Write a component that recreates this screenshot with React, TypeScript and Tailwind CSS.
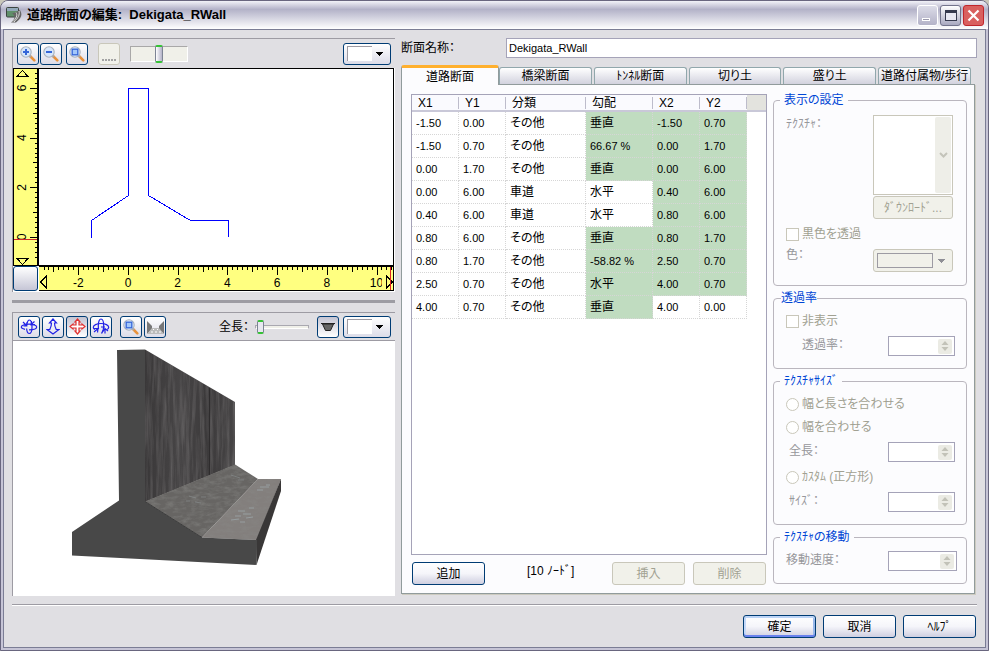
import React from 'react';
import { clsx } from 'clsx';

type RowData = { cells: string[]; green: boolean[] };

const rows: RowData[] = [
  { cells: ['-1.50', '0.00', 'その他', '垂直', '-1.50', '0.70'], green: [true, true, true] },
  { cells: ['-1.50', '0.70', 'その他', '66.67 %', '0.00', '1.70'], green: [true, true, true] },
  { cells: ['0.00', '1.70', 'その他', '垂直', '0.00', '6.00'], green: [true, true, true] },
  { cells: ['0.00', '6.00', '車道', '水平', '0.40', '6.00'], green: [false, true, true] },
  { cells: ['0.40', '6.00', '車道', '水平', '0.80', '6.00'], green: [false, true, true] },
  { cells: ['0.80', '6.00', 'その他', '垂直', '0.80', '1.70'], green: [true, true, true] },
  { cells: ['0.80', '1.70', 'その他', '-58.82 %', '2.50', '0.70'], green: [true, true, true] },
  { cells: ['2.50', '0.70', 'その他', '水平', '4.00', '0.70'], green: [true, true, true] },
  { cells: ['4.00', '0.70', 'その他', '垂直', '4.00', '0.00'], green: [true, false, false] },
];

const headers = ['X1', 'Y1', '分類', '勾配', 'X2', 'Y2'];
const tabs = ['橋梁断面', 'ﾄﾝﾈﾙ断面', '切り土', '盛り土', '道路付属物/歩行'];

const UNIT = 24.85;

/* ---------- icons ---------- */

function Magnifier({ kind }: { kind: 'plus' | 'minus' | 'box' }) {
  return (
    <svg width="16" height="16" viewBox="0 0 16 16" aria-hidden="true">
      <path d="M10.500 10.500l3.800 3.800" stroke="#e8923c" strokeWidth="2.600" strokeLinecap="round" />
      <path d="M9.500 9.500l1.500 1.500" stroke="#a8a4a8" strokeWidth="2" />
      <circle cx="6" cy="6" r="5.200" fill="#d6e6fb" stroke="#a9b2bd" strokeWidth="1.100" />
      {kind === 'plus' && <path d="M3 6h6M6 3v6" stroke="#3566d8" strokeWidth="2" />}
      {kind === 'minus' && <path d="M3 6h6" stroke="#3566d8" strokeWidth="2" />}
      {kind === 'box' && <rect x="3.200" y="3.200" width="5.600" height="5.600" fill="#a3c8fb" stroke="#3566d8" strokeWidth="1.300" />}
    </svg>
  );
}

function OrbitIcon() {
  return (
    <svg width="18" height="16" viewBox="0 0 18 16" fill="none" stroke="#2222e6" strokeWidth="1.200" aria-hidden="true">
      <path d="M7 4.500C7.500 2.500 8.300 1 9.300 1c1.500 0 2.700 3 2.700 7s-1.200 6.500-2.700 6.500S6.800 12 6.600 9.500" />
      <path d="M5 10.300C2.800 9.800 1.300 9 1.300 8c0-1.500 3.400-2.800 7.700-2.800S16.700 6.500 16.700 8 13.500 10.800 9 10.800" />
      <path d="M3 3l3.500 3.500M6.800 3.500v3.300H3.500" />
      <path d="M14.500 2.500L11 5.500M15 5.500l-4 .3.500-3.800" />
    </svg>
  );
}

function UpDownIcon() {
  return (
    <svg width="14" height="17" viewBox="0 0 14 17" fill="none" stroke="#2222e6" strokeWidth="1.200" aria-hidden="true">
      <path d="M7 1L3.500 5H5.500C5.500 8 4.500 10 3.800 11.500H1L7 16L13 11.500H10.200C9.500 10 8.500 8 8.500 5H10.500z" />
    </svg>
  );
}

function MoveIcon() {
  return (
    <svg width="17" height="17" viewBox="0 0 17 17" fill="none" stroke="#e03030" strokeWidth="1.200" aria-hidden="true">
      <path d="M8.500 1L11 4H10V7H13V6L16 8.500L13 11V10H10V13H11L8.500 16L6 13H7V10H4V11L1 8.500L4 6V7H7V4H6z" fill="#fff" />
    </svg>
  );
}

function RotateIcon() {
  return (
    <svg width="18" height="17" viewBox="0 0 18 17" fill="none" stroke="#2222e6" strokeWidth="1.200" aria-hidden="true">
      <path d="M6.600 11C6.300 10 6.300 9 6.300 7.500c0-3.800 1.200-6.500 2.700-6.500s2.700 3 2.700 7-.9 6-2.200 7.500" />
      <path d="M3 11.500C1.800 11 1.300 10 1.300 9.200c0-2 3.400-3.700 7.700-3.700s7.700 1.700 7.700 3.700c0 .8-.5 1.600-1.500 2.300" />
      <path d="M2 14l3.500-3M2 10.500l4 0-.5 4M13 15.500v-4M10.500 13.500l2.500-3 3 2.500M9 9h4" />
    </svg>
  );
}

function RoadViewIcon() {
  return (
    <svg width="17" height="14" viewBox="0 0 17 14" aria-hidden="true">
      <path d="M0 1l5 5v3l-5 5z" fill="#777" />
      <path d="M17 1l-5 5v3l5 5z" fill="#777" />
      <path d="M5 8h7l5 6H0z" fill="#bbb" />
      <path d="M4 12h2M8 12h2M12 12h2M6 9.500h1M10 9.500h1" stroke="#fff" />
    </svg>
  );
}

function AppIcon() {
  return (
    <svg width="16" height="16" viewBox="0 0 16 16" aria-hidden="true">
      <rect x="0.500" y="0.500" width="12" height="9.500" rx="1" fill="#5f8f6a" stroke="#3c4440" />
      <path d="M1 1h11v3H1z" fill="#93a9ba" />
      <path d="M6 6c4 0 5-2 8-3 2.500 4 2 8-4 12.500H5c4-3.500 5-6 1-9.500z" fill="#666" />
      <path d="M13 4c1 4-1 7-5 11M10 5.500c2 3 0 6-3 9" stroke="#ddd" fill="none" />
    </svg>
  );
}

function DownArrow({ muted = false }: { muted?: boolean }) {
  return (
    <svg width="7" height="4" viewBox="0 0 7 4" shapeRendering="crispEdges" aria-hidden="true">
      <path d="M0 0h7L3.500 4z" fill={muted ? '#8f8f95' : '#000'} />
    </svg>
  );
}

/* ---------- small controls ---------- */

function ToolButton({ label, pressed, children, className }: { label: string; pressed?: boolean; children?: React.ReactNode; className?: string }) {
  return (
    <button
      type="button"
      aria-label={label}
      className={clsx(
        'flex h-[22px] w-[22px] shrink-0 items-center justify-center rounded-[3px] border border-[#003c74]',
        pressed ? 'bg-linear-to-b from-[#c4c4d2] to-white' : 'bg-linear-to-b from-white to-[#dcdce8]',
        className,
      )}
    >
      {children}
    </button>
  );
}

function SwatchButton({ label }: { label: string }) {
  return (
    <button
      type="button"
      aria-label={label}
      className="flex h-[22px] w-12 shrink-0 items-center gap-1 rounded-[3px] border border-[#003c74] bg-linear-to-b from-white to-[#dcdce8] pl-[3px]"
    >
      <span className="h-[15px] w-[25px] border-t border-l border-[#9d9ba3] bg-white" />
      <DownArrow />
    </button>
  );
}

function PushButton({ children, disabled, primary }: { children: React.ReactNode; disabled?: boolean; primary?: boolean }) {
  return (
    <button
      type="button"
      disabled={disabled}
      className={clsx(
        'h-[23px] w-[73px] shrink-0 rounded-[3px] border text-center leading-5',
        disabled
          ? 'border-[#c9c7ba] bg-[#f1f1ea] text-[#a1a192]'
          : 'border-[#003c74] bg-linear-to-b from-white via-[#f5f5fa] to-[#cfcfe0] text-black',
        primary && 'shadow-[inset_0_2px_0_#bcd4f6,inset_0_-2px_0_#6982ee,inset_2px_0_0_#c4d8f8,inset_-2px_0_0_#98b8ea]',
      )}
    >
      {children}
    </button>
  );
}

function Spin({ id, wide }: { id: string; wide?: boolean }) {
  return (
    <span className={clsx('flex h-5 shrink-0 items-center border border-[#a5a3b8] bg-white pr-[2px]', wide ? 'w-[69px]' : 'w-[67px]')}>
      <input id={id} type="text" disabled className="h-full w-0 flex-1 bg-white px-1 outline-none" />
      <span className="flex h-[15px] w-[14px] flex-col items-center justify-center rounded-[2px] bg-[#ebebe4]">
        <svg width="8" height="12" viewBox="0 0 8 12" aria-hidden="true">
          <path d="M0.500 5L4 1L7.500 5zM0.500 7L4 11L7.500 7z" fill="#c2c2b8" />
        </svg>
      </span>
    </span>
  );
}

function Group({ title, children, className, tight }: { title: string; children: React.ReactNode; className?: string; tight?: boolean }) {
  return (
    <fieldset className={clsx('rounded-[4px] border border-[#bab6be] pl-3 text-[#97979b]', className)}>
      <legend className={clsx('h-3 leading-3 text-[#0046d5]', tight ? '-ml-[5px]' : '-ml-[6px] px-1')}>{title}</legend>
      {children}
    </fieldset>
  );
}

const tickBox = 'h-[13px] w-[13px] shrink-0 appearance-none border border-[#c9c7ba] bg-white';
const radioDot = 'h-[13px] w-[13px] shrink-0 appearance-none rounded-full border border-[#c9c7ba] bg-white';

/* ---------- 2D section ---------- */

function VerticalRuler() {
  const ticks = Array.from({ length: 38 }, (_, i) => i - 4);
  return (
    <svg width="26" height="198" viewBox="13 68 26 198" className="block" shapeRendering="crispEdges">
      <rect x="13" y="68" width="26" height="198" fill="#ffff80" />
      {ticks.map((t) => {
        const y = Math.round(237 - (t / 5) * UNIT);
        const len = t % 10 === 0 ? 7 : t % 5 === 0 ? 4 : 2;
        return <rect key={t} x={37 - len} y={y} width={len} height="1" fill="#000" />;
      })}
      <g fontSize="12" textAnchor="middle" fill="#000">
        {[0, 2, 4, 6].map((v) => (
          <text key={v} transform={`translate(26 ${237 - v * UNIT}) rotate(-90)`}>{v}</text>
        ))}
      </g>
      <path d="M17 76.500h11L22.500 70.500z M17 258.500h11L22.500 264.500z" fill="none" stroke="#000" />
      <rect x="13" y="239" width="24" height="1" fill="#d02828" />
      <path d="M13 68.500h26M13.500 68v198M13 265.500h26" stroke="#000" />
      <rect x="37" y="68" width="2" height="198" fill="#000" />
    </svg>
  );
}

function HorizontalRuler() {
  const ticks = Array.from({ length: 71 }, (_, i) => i - 17);
  return (
    <svg width="355" height="26" viewBox="39 266 355 26" className="block" shapeRendering="crispEdges">
      <rect x="39" y="266" width="355" height="25" fill="#ffff80" />
      {ticks.map((t) => {
        const x = Math.round(128 + (t / 5) * UNIT);
        const len = t % 10 === 0 ? 8 : t % 5 === 0 ? 5 : 3;
        return <rect key={t} x={x} y="267" width="1" height={len} fill="#000" />;
      })}
      <g fontSize="12" textAnchor="middle" fill="#000">
        {[-2, 0, 2, 4, 6, 8, 10].map((v) => (
          <text key={v} x={128 + v * UNIT} y="287">{v}</text>
        ))}
      </g>
      <rect x="382" y="276" width="12" height="14" fill="#ffff80" />
      <path d="M46.500 276v12L40.500 282z M386.500 276v12L392.500 282z" fill="none" stroke="#000" />
      <rect x="390" y="267" width="1" height="23" fill="#e02020" />
      <path d="M39 266.500h355M39 290.500h355M393.500 266v25" stroke="#000" />
      <rect x="39" y="291" width="355" height="1" fill="#fff" />
    </svg>
  );
}

function SectionCanvas() {
  return (
    <svg width="355" height="198" viewBox="39 68 355 198" className="block" shapeRendering="crispEdges">
      <rect x="39" y="68" width="355" height="198" fill="#fff" />
      <path
        d="M91.500 238V220.500L128.500 195.500V88.500H148.500V195.500L190.500 220.500H228.500V237"
        fill="none"
        stroke="#0000ff"
      />
      <path d="M39 68.500h355M39 265.500h355M393.500 68v198" stroke="#000" />
    </svg>
  );
}

/* ---------- 3D preview ---------- */

function WallPreview() {
  return (
    <svg width="382" height="254" viewBox="13 341 382 254" className="block">
      <defs>
        <filter id="streaks" x="0" y="0" width="1" height="1">
          <feTurbulence type="fractalNoise" baseFrequency="0.3 0.02" numOctaves="4" seed="4" />
          <feColorMatrix values="0 0 0 0 0.55  0 0 0 0 0.53  0 0 0 0 0.53  1.6 0 0 0 -0.6" />
          <feComposite in2="SourceGraphic" operator="in" />
        </filter>
        <filter id="grain" x="0" y="0" width="1" height="1">
          <feTurbulence type="fractalNoise" baseFrequency="0.12 0.3" numOctaves="4" seed="9" />
          <feColorMatrix values="0 0 0 0 0.25  0 0 0 0 0.25  0 0 0 0 0.24  1.8 0 0 0 -0.7" />
          <feComposite in2="SourceGraphic" operator="in" />
        </filter>
        <linearGradient id="wallShade" x1="0" x2="1">
          <stop offset="0" stopColor="#3a3839" />
          <stop offset="0.4" stopColor="#474546" />
          <stop offset="0.68" stopColor="#3c3a3b" />
          <stop offset="1" stopColor="#464445" />
        </linearGradient>
      </defs>
      <path d="M145 349.500L235 402V465L145 502z" fill="url(#wallShade)" />
      <path d="M145 349.500L235 402V465L145 502z" fill="#fff" filter="url(#streaks)" opacity="0.28" />
      <path d="M209.500 388V475" stroke="#2e2c2d" />
      <path d="M145 501.500L235 464.500L258 479L202 537.500z" fill="#676563" />
      <path d="M258 479H281L257 540L202 537.500z" fill="#837f7d" />
      <path d="M145 501.500L235 464.500L258 479H281L257 540L202 537.500z" fill="#fff" filter="url(#grain)" opacity="0.6" />
      <path d="M281 479V491L256.500 565L256 540z" fill="#393737" />
      <path d="M117 350L145 349.500V501.500L202 537.500L257 540L256.500 565L72 555.500V532L119 500.500z" fill="#484848" />
      <g stroke="#9ca5a8" strokeWidth="1" opacity="0.8">
        <path d="M238 511h7M231 520l8-1M235 516h6M243 514h8M246 518l7-1M240 522h5M249 508h5M260 487h9M257 490h6M266 485h4" />
        <path d="M189 496l7 2M195 502l6 1M186 501h4M201 497h5M231 475l9 3M238 480h6" opacity="0.5" />
      </g>
      <path d="M202 537.500L145 501.500" stroke="#3b3b3b" />
    </svg>
  );
}

/* ---------- page ---------- */

export default function App() {
  return (
    <div className="flex min-h-screen flex-col bg-[#c9c7ba] font-['Liberation_Sans','Noto_Sans_CJK_JP',sans-serif] text-xs text-black [font-feature-settings:'palt']">
      <div className="flex flex-1 flex-col overflow-hidden rounded-t-lg border border-[#69667f] bg-[#c6c4d6]">
        <header className="flex h-7 items-center gap-[5px] bg-linear-to-b from-[#f2f2f8] via-[#b3b2c8] via-30% to-white pr-1 pl-[5px]">
          <AppIcon />
          <h1 className="flex-1 text-[13px] font-bold whitespace-pre">道路断面の編集:  Dekigata_RWall</h1>
          <div className="flex gap-[2px]">
            <button type="button" aria-label="最小化" className="flex h-[21px] w-[21px] items-end rounded-[3px] border border-white bg-linear-to-b from-[#dcdce8] to-[#b4b3c8] pb-1 pl-1">
              <span className="h-[3px] w-2 border border-white bg-[#9a99ac]" />
            </button>
            <button type="button" aria-label="最大化" className="flex h-[21px] w-[21px] items-center justify-center rounded-[3px] border border-[#73748c] bg-linear-to-b from-white to-[#a9a9c0]">
              <span className="h-[11px] w-[12px] border border-t-[3px] border-[#363a4e] bg-[#e8e8f2]" />
            </button>
            <button type="button" aria-label="閉じる" className="flex h-[21px] w-[21px] items-center justify-center rounded-[3px] border border-[#c0262c] bg-[#d9605f]">
              <svg width="13" height="13" viewBox="0 0 13 13" aria-hidden="true">
                <path d="M1.500 1.500l10 10M11.500 1.500l-10 10" stroke="#fff" strokeWidth="2.200" />
              </svg>
            </button>
          </div>
        </header>

        <div className="mx-[2px] mb-[2px] flex flex-1 flex-col border border-[#7b7d95] bg-[#e0dfe3] px-2 pt-2 pb-[9px]">
          <main className="flex flex-1 gap-[6px]">
            {/* left: section and 3D preview */}
            <section className="flex w-[383px] shrink-0 flex-col">
              <div className="border-t border-l border-[#9d9ba3]">
                <div className="flex h-[29px] items-center pr-1 pl-1">
                  <div className="flex gap-[1px]">
                    <ToolButton label="拡大"><Magnifier kind="plus" /></ToolButton>
                    <ToolButton label="縮小"><Magnifier kind="minus" /></ToolButton>
                  </div>
                  <ToolButton label="全体表示" className="ml-1"><Magnifier kind="box" /></ToolButton>
                  <button type="button" disabled aria-label="グリッド" className="ml-[10px] flex h-[22px] w-[22px] items-end justify-center rounded-[3px] border border-[#c9c7ba] bg-[#f1f1ea] pb-[3px]">
                    <svg width="14" height="2" viewBox="0 0 14 2" aria-hidden="true">
                      <path d="M0 0h2v2H0zM3 0h2v2H3zM6 0h2v2H6zM9 0h2v2H9zM12 0h2v2h-2z" fill="#a3a3a3" />
                    </svg>
                  </button>
                  <input
                    type="range"
                    aria-label="表示倍率"
                    defaultValue={50}
                    className="ml-[10px] h-[18px] w-[58px] appearance-none bg-transparent [&::-webkit-slider-runnable-track]:h-4 [&::-webkit-slider-runnable-track]:border [&::-webkit-slider-runnable-track]:border-[#a9a8a8] [&::-webkit-slider-runnable-track]:border-r-white [&::-webkit-slider-runnable-track]:border-b-white [&::-webkit-slider-runnable-track]:bg-[#f0f0e9] [&::-webkit-slider-thumb]:-mt-[2px] [&::-webkit-slider-thumb]:h-[18px] [&::-webkit-slider-thumb]:w-2 [&::-webkit-slider-thumb]:appearance-none [&::-webkit-slider-thumb]:rounded-[2px] [&::-webkit-slider-thumb]:border-x [&::-webkit-slider-thumb]:border-y-2 [&::-webkit-slider-thumb]:border-x-[#7d8494] [&::-webkit-slider-thumb]:border-y-[#35c235] [&::-webkit-slider-thumb]:bg-linear-to-r [&::-webkit-slider-thumb]:from-white [&::-webkit-slider-thumb]:to-[#b4b3c8]"
                  />
                  <span className="flex-1" />
                  <SwatchButton label="背景色" />
                </div>
                <div className="grid grid-cols-[26px_1fr] grid-rows-[198px_26px] bg-white">
                  <VerticalRuler />
                  <SectionCanvas />
                  <button type="button" aria-label="原点" className="h-[25px] w-[25px] rounded-[3px] border border-[#003c74] bg-linear-to-b from-white to-[#c6c6d6]" />
                  <HorizontalRuler />
                </div>
              </div>

              <div className="my-2 h-[3px] bg-[#9d9ca3]" />

              <div className="mt-[1px] flex flex-1 flex-col border-t border-l border-[#9d9ba3]">
                <div className="flex h-7 items-center border-b border-[#9d9ba3] pr-1 pl-[5px]">
                  <div className="flex gap-[2px]">
                    <ToolButton label="回転"><OrbitIcon /></ToolButton>
                    <ToolButton label="上下移動"><UpDownIcon /></ToolButton>
                    <ToolButton label="平行移動" pressed><MoveIcon /></ToolButton>
                    <ToolButton label="視点回転"><RotateIcon /></ToolButton>
                  </div>
                  <div className="ml-2 flex gap-[2px]">
                    <ToolButton label="全体表示"><Magnifier kind="box" /></ToolButton>
                    <ToolButton label="道路表示"><RoadViewIcon /></ToolButton>
                  </div>
                  <span className="flex-1" />
                  <label htmlFor="length3d">全長：</label>
                  <input
                    id="length3d"
                    type="range"
                    defaultValue={3}
                    className="ml-[6px] h-4 w-[54px] appearance-none bg-transparent [&::-webkit-slider-runnable-track]:h-1 [&::-webkit-slider-runnable-track]:border [&::-webkit-slider-runnable-track]:border-[#a9a8b0] [&::-webkit-slider-runnable-track]:border-b-white [&::-webkit-slider-runnable-track]:bg-[#f0f0e9] [&::-webkit-slider-thumb]:-mt-[6px] [&::-webkit-slider-thumb]:h-[14px] [&::-webkit-slider-thumb]:w-[7px] [&::-webkit-slider-thumb]:appearance-none [&::-webkit-slider-thumb]:rounded-[2px] [&::-webkit-slider-thumb]:border-x [&::-webkit-slider-thumb]:border-y-2 [&::-webkit-slider-thumb]:border-x-[#7d8494] [&::-webkit-slider-thumb]:border-y-[#35c235] [&::-webkit-slider-thumb]:bg-[#e8e8f0]"
                  />
                  <ToolButton label="断面表示" pressed className="ml-2">
                    <svg width="14" height="8" viewBox="0 0 14 8" aria-hidden="true">
                      <path d="M0 0.500h14M1.500 1L4.500 7.500h5L12.500 1z" fill="#666" stroke="#222" />
                    </svg>
                  </ToolButton>
                  <span className="w-1" />
                  <SwatchButton label="3D背景色" />
                </div>
                <div className="flex-1 bg-white">
                  <WallPreview />
                </div>
              </div>
            </section>

            {/* right: name, tabs, node table */}
            <section className="flex min-w-0 flex-1 flex-col pb-[2px]">
              <div className="flex h-5 items-center">
                <label htmlFor="sectionName" className="w-[105px] shrink-0">断面名称：</label>
                <input id="sectionName" type="text" defaultValue="Dekigata_RWall" className="h-5 w-0 flex-1 border border-[#a5a3b8] bg-white px-[2px] text-[11px]" />
              </div>

              <div className="mt-[7px] flex h-[19px] items-end pr-[6px]">
                <button type="button" aria-pressed="true" className="z-10 -mb-px h-5 w-[98px] shrink-0 rounded-t-[3px] border border-t-[3px] border-b-0 border-[#919b9c] border-t-[#ffb02e] bg-[#fcfcfe] leading-4">
                  道路断面
                </button>
                <div className="flex min-w-0 flex-1 gap-[2px]">
                  {tabs.map((t) => (
                    <button
                      key={t}
                      type="button"
                      className="h-[17px] flex-auto basis-0 overflow-hidden rounded-t-[3px] border border-b-0 border-[#91a7ac] bg-linear-to-b from-white to-[#d2d2de] leading-4 whitespace-nowrap"
                    >
                      {t}
                    </button>
                  ))}
                </div>
              </div>

              <div className="mr-[2px] flex flex-1 gap-[6px] border border-[#919b9c] bg-[#fcfcfe] pt-[9px] pr-[7px] pb-2 pl-[9px] shadow-[1px_1px_0_#cdcbc0]">
                <div className="flex min-w-0 flex-1 flex-col">
                  <div className="flex-1 border border-[#a5a3b8] bg-white">
                    <div className="flex">
                      <table className="w-[335px] table-fixed border-separate border-spacing-0">
                        <colgroup>
                          <col className="w-[47px]" />
                          <col className="w-[47px]" />
                          <col className="w-[80px]" />
                          <col className="w-[67px]" />
                          <col className="w-[47px]" />
                          <col className="w-[47px]" />
                        </colgroup>
                        <thead>
                          <tr>
                            {headers.map((h) => (
                              <th key={h} className="h-[17px] border-b-2 border-[#c9c8d8] bg-[#fafafe] p-0 text-left font-normal">
                                <span className="block border-r border-[#bdbccb] pl-[6px] leading-3">{h}</span>
                              </th>
                            ))}
                          </tr>
                        </thead>
                        <tbody>
                          {rows.map((r, i) => (
                            <tr key={i}>
                              {r.cells.map((c, j) => (
                                <td
                                  key={j}
                                  className={clsx(
                                    'h-[23px] border-r border-b border-dotted border-[#d6d6d6] p-0 pl-1 leading-5',
                                    /[0-9]/.test(c) ? 'text-[11px]' : 'text-xs',
                                    j > 2 && r.green[j - 3] ? 'bg-[#c0dcc0]' : 'bg-white',
                                  )}
                                >
                                  {c}
                                </td>
                              ))}
                            </tr>
                          ))}
                        </tbody>
                      </table>
                      <div className="h-[17px] flex-1 border-b-2 border-[#c9c8d8] bg-[#e3e3de]" />
                    </div>
                  </div>
                  <div className="mt-[7px] flex items-center px-[1px]">
                    <PushButton>追加</PushButton>
                    <span className="flex-1 pb-[6px] pl-[42px]">[10 ﾉｰﾄﾞ]</span>
                    <div className="flex gap-2">
                      <PushButton disabled>挿入</PushButton>
                      <PushButton disabled>削除</PushButton>
                    </div>
                  </div>
                </div>

                <div className="flex w-[194px] shrink-0 flex-col gap-[6px]">
                  <Group title="表示の設定" className="h-[192px] pr-[13px]">
                    <div className="mt-[9px] flex justify-between">
                      <label htmlFor="texture" className="leading-[18px]">ﾃｸｽﾁｬ：</label>
                      <span className="relative h-20 w-20 border border-[#c9c7ba] bg-white">
                        <select id="texture" disabled className="h-full w-full appearance-none bg-white" />
                        <span className="pointer-events-none absolute top-[1px] right-[1px] bottom-[1px] flex w-4 items-center justify-center rounded-[2px] bg-[#eeeee8]">
                          <svg width="9" height="6" viewBox="0 0 9 6" aria-hidden="true">
                            <path d="M1 1l3.500 3.500L8 1" fill="none" stroke="#c4c4ba" strokeWidth="2" />
                          </svg>
                        </span>
                      </span>
                    </div>
                    <div className="mt-[1px] flex justify-end">
                      <button type="button" disabled className="h-[23px] w-20 rounded-[3px] border border-[#c9c7ba] bg-[#f1f1ea] text-center leading-5 text-[#a1a192]">
                        ﾀﾞｳﾝﾛｰﾄﾞ...
                      </button>
                    </div>
                    <label className="mt-[7px] flex h-4 items-center gap-[3px] text-[#a1a192]">
                      <input type="checkbox" disabled className={tickBox} />
                      黒色を透過
                    </label>
                    <div className="mt-[7px] flex h-[23px] justify-between">
                      <span className="leading-3">色：</span>
                      <button type="button" disabled aria-label="色" className="flex h-[23px] w-20 items-center gap-[5px] rounded-[3px] border border-[#c9c7ba] bg-[#f1f1ea] pl-[3px]">
                        <span className="h-[15px] w-[56px] border border-[#9d9ba3]" />
                        <DownArrow muted />
                      </button>
                    </div>
                  </Group>

                  <Group title="透過率" tight className="h-[77px] pr-[11px]">
                    <label className="mt-[9px] flex h-4 items-center gap-[3px] text-[#a1a192]">
                      <input type="checkbox" disabled className={tickBox} />
                      非表示
                    </label>
                    <div className="mt-[7px] flex justify-between pl-4">
                      <label htmlFor="opacity" className="leading-[18px]">透過率：</label>
                      <Spin id="opacity" />
                    </div>
                  </Group>

                  <Group title="ﾃｸｽﾁｬｻｲｽﾞ" className="h-[150px] pr-[11px]">
                    <label className="mt-[9px] flex h-4 items-center gap-[3px] text-[#a1a192]">
                      <input type="radio" name="fit" disabled className={radioDot} />
                      幅と長さを合わせる
                    </label>
                    <label className="mt-[7px] flex h-4 items-center gap-[3px] text-[#a1a192]">
                      <input type="radio" name="fit" disabled className={radioDot} />
                      幅を合わせる
                    </label>
                    <div className="mt-[7px] flex justify-between pl-[3px]">
                      <label htmlFor="texLength" className="leading-[18px]">全長：</label>
                      <Spin id="texLength" />
                    </div>
                    <label className="mt-[7px] flex h-4 items-center gap-[3px] text-[#a1a192]">
                      <input type="radio" name="fit" disabled className={radioDot} />
                      ｶｽﾀﾑ (正方形)
                    </label>
                    <div className="mt-[7px] flex justify-between pl-[3px]">
                      <label htmlFor="texSize" className="leading-[18px]">ｻｲｽﾞ：</label>
                      <Spin id="texSize" />
                    </div>
                  </Group>

                  <Group title="ﾃｸｽﾁｬの移動" className="h-[53px] pr-[9px]">
                    <div className="mt-2 flex justify-between">
                      <label htmlFor="moveSpeed" className="leading-[18px]">移動速度：</label>
                      <Spin id="moveSpeed" wide />
                    </div>
                  </Group>
                </div>
              </div>
            </section>
          </main>

          <footer className="mt-2 flex justify-end gap-[7px] border-t border-[#9d9ba3] pt-[10px] pr-[1px] shadow-[inset_0_1px_0_#fff]">
            <PushButton primary>確定</PushButton>
            <PushButton>取消</PushButton>
            <PushButton>ﾍﾙﾌﾟ</PushButton>
          </footer>
        </div>
      </div>
    </div>
  );
}
